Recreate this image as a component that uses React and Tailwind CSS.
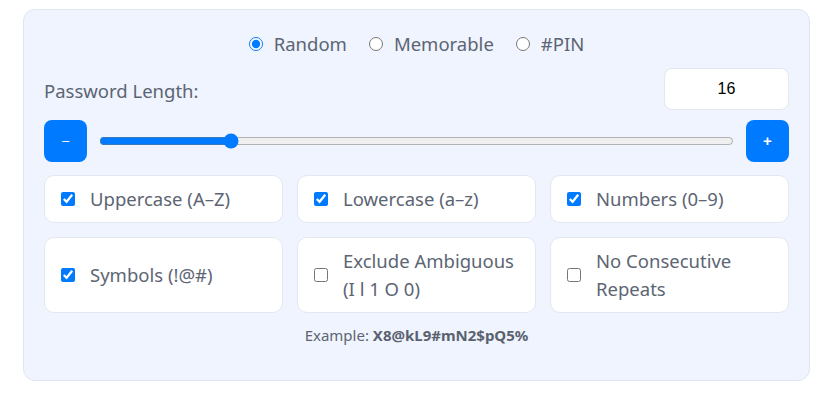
import { useState } from 'react';

const options = [
  { id: 'upper', label: 'Uppercase (A–Z)', on: true },
  { id: 'lower', label: 'Lowercase (a–z)', on: true },
  { id: 'nums', label: 'Numbers (0–9)', on: true },
  { id: 'syms', label: 'Symbols (!@#)', on: true },
  { id: 'ambig', label: 'Exclude Ambiguous (I l 1 O 0)', on: false },
  { id: 'repeat', label: 'No Consecutive Repeats', on: false },
];

const modes = ['Random', 'Memorable', '#PIN'];

export default function App() {
  const [mode, setMode] = useState('Random');
  const [length, setLength] = useState(16);
  const [checked, setChecked] = useState(
    Object.fromEntries(options.map((o) => [o.id, o.on]))
  );

  return (
    <div className="w-[819px] h-[396px] bg-white font-['Noto_Sans',sans-serif] text-[#5c6573]">
      <div className="ml-[23px] mt-[9px] w-[787px] h-[372px] bg-[#eff4fe] border border-[#dfe6f2] rounded-[12px] px-[20px] pt-[19px]">
        {/* Mode */}
        <div className="flex justify-center items-center gap-[22px] h-[30px] text-[18.5px]">
          {modes.map((m) => (
            <label key={m} className="flex items-center gap-[11px]">
              <input
                type="radio"
                name="mode"
                checked={mode === m}
                onChange={() => setMode(m)}
                className="w-[14px] h-[14px] m-0 accent-[#007bff]"
              />
              {m}
            </label>
          ))}
        </div>

        {/* Length */}
        <div className="flex items-center justify-between mt-[9px]">
          <span className="text-[18.5px] pt-[3px]">Password Length:</span>
          <input
            type="text"
            value={length}
            readOnly
            className="w-[125px] h-[42px] bg-white border border-[#e2e7f0] rounded-[8px] text-center text-[16px] text-black font-['Liberation_Sans',sans-serif] outline-none"
          />
        </div>

        {/* Slider */}
        <div className="flex items-center gap-[12px] mt-[10px]">
          <button
            onClick={() => setLength(Math.max(4, length - 1))}
            className="w-[43px] h-[42px] rounded-[8px] bg-[#007bff] text-white text-[13px] font-['Liberation_Sans',sans-serif] flex items-center justify-center"
          >
            –
          </button>
          <input
            type="range"
            min={4}
            max={64}
            value={length}
            onChange={(e) => setLength(+e.target.value)}
            className="flex-1 accent-[#007bff]"
          />
          <button
            onClick={() => setLength(Math.min(64, length + 1))}
            className="w-[43px] h-[42px] rounded-[8px] bg-[#007bff] text-white text-[15px] font-bold font-['Liberation_Sans',sans-serif] flex items-center justify-center"
          >
            +
          </button>
        </div>

        {/* Options */}
        <div className="grid grid-cols-3 gap-[14px] mt-[13px]">
          {options.map((o) => (
            <label
              key={o.id}
              className="flex items-center gap-[15px] bg-white border border-[#e3e8f0] rounded-[10px] pl-[16px] pr-[14px] py-[9px] text-[18.5px] leading-[28px]"
            >
              <input
                type="checkbox"
                checked={checked[o.id]}
                onChange={() => setChecked({ ...checked, [o.id]: !checked[o.id] })}
                className="w-[14px] h-[14px] m-0 shrink-0 accent-[#007bff]"
              />
              <span>{o.label}</span>
            </label>
          ))}
        </div>

        {/* Example */}
        <p className="text-center text-[15px] mt-[11px]">
          Example: <b className="font-bold text-[#5a6270]">X8@kL9#mN2$pQ5%</b>
        </p>
      </div>
    </div>
  );
}
